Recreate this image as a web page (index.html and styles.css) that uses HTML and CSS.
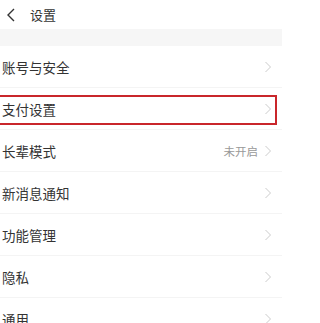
FILE: index.html
```html
<!DOCTYPE html>
<html lang="zh">
<head>
<meta charset="utf-8">
<link rel="stylesheet" href="styles.css">
</head>
<body>
<div class="page">
  <div class="header">
    <svg class="back" width="10" height="14" viewBox="0 0 10 14"><path d="M8 1 L2 7 L8 13" fill="none" stroke="#333" stroke-width="1.4"/></svg>
    <span class="title">设置</span>
  </div>
  <div class="band"></div>
  <div class="list">
    <div class="row"><span class="label">账号与安全</span><span class="right"><svg class="chev" width="8" height="12" viewBox="0 0 8 12"><path d="M1.5 1 L6.5 6 L1.5 11" fill="none" stroke="#cccccc" stroke-width="1"/></svg></span></div>
    <div class="row marked"><span class="label">支付设置</span><span class="right"><svg class="chev" width="8" height="12" viewBox="0 0 8 12"><path d="M1.5 1 L6.5 6 L1.5 11" fill="none" stroke="#cccccc" stroke-width="1"/></svg></span><div class="mark"></div></div>
    <div class="row"><span class="label">长辈模式</span><span class="right"><span class="value">未开启</span><svg class="chev" width="8" height="12" viewBox="0 0 8 12"><path d="M1.5 1 L6.5 6 L1.5 11" fill="none" stroke="#cccccc" stroke-width="1"/></svg></span></div>
    <div class="row"><span class="label">新消息通知</span><span class="right"><svg class="chev" width="8" height="12" viewBox="0 0 8 12"><path d="M1.5 1 L6.5 6 L1.5 11" fill="none" stroke="#cccccc" stroke-width="1"/></svg></span></div>
    <div class="row"><span class="label">功能管理</span><span class="right"><svg class="chev" width="8" height="12" viewBox="0 0 8 12"><path d="M1.5 1 L6.5 6 L1.5 11" fill="none" stroke="#cccccc" stroke-width="1"/></svg></span></div>
    <div class="row"><span class="label">隐私</span><span class="right"><svg class="chev" width="8" height="12" viewBox="0 0 8 12"><path d="M1.5 1 L6.5 6 L1.5 11" fill="none" stroke="#cccccc" stroke-width="1"/></svg></span></div>
    <div class="row"><span class="label">通用</span><span class="right"><svg class="chev" width="8" height="12" viewBox="0 0 8 12"><path d="M1.5 1 L6.5 6 L1.5 11" fill="none" stroke="#cccccc" stroke-width="1"/></svg></span></div>
  </div>
</div>
</body>
</html>
```
FILE: styles.css
```css
html, body {
  margin: 0;
  padding: 0;
  background: #ffffff;
}
body {
  font-family: "Noto Sans CJK SC", "Noto Sans", sans-serif;
  color: #333333;
  height: 323px;
  overflow: hidden;
}
.page {
  width: 282px;
  display: flex;
  flex-direction: column;
}
.header {
  height: 29px;
  display: flex;
  align-items: center;
  padding-left: 6px;
  gap: 14px;
}
.back {
  display: block;
}
.title {
  font-size: 13px;
  color: #333;
}
.band {
  height: 17px;
  background: #f6f6f6;
}
.list {
  display: flex;
  flex-direction: column;
}
.row {
  position: relative;
  height: 42px;
  box-sizing: border-box;
  display: flex;
  align-items: center;
  justify-content: space-between;
  padding-left: 2px;
  padding-right: 10px;
  border-bottom: 1px solid #f4f4f4;
}
.label {
  font-size: 13.5px;
  color: #333;
}
.right {
  display: flex;
  align-items: center;
  gap: 6px;
}
.value {
  font-size: 11.5px;
  color: #999;
}
.chev {
  display: block;
}
.mark {
  position: absolute;
  left: -3px;
  right: 5px;
  top: 7px;
  bottom: 4px;
  border: 2px solid #c9262b;
}
```
